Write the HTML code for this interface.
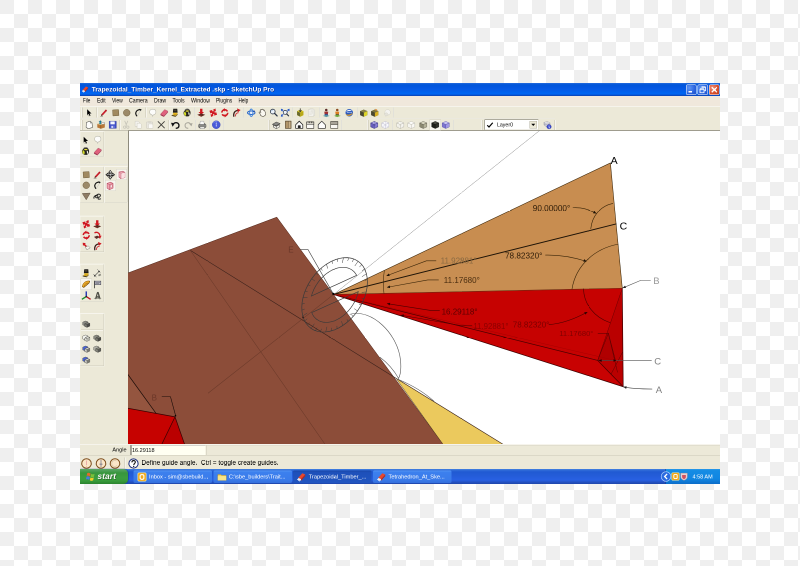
<!DOCTYPE html>
<html><head><meta charset="utf-8"><title>Trapezoidal_Timber_Kernel_Extracted .skp - SketchUp Pro</title>
<style>
html,body{margin:0;padding:0}
body{width:800px;height:566px;overflow:hidden;position:relative;background-color:#fff;
 background-image:linear-gradient(45deg,#efefef 25%,transparent 25%,transparent 75%,#efefef 75%),linear-gradient(45deg,#efefef 25%,transparent 25%,transparent 75%,#efefef 75%);
 background-size:28px 28px;background-position:14px 0,0 14px;font-family:"Liberation Sans",sans-serif}
#w{position:absolute;left:80px;top:82.75px;width:1280px;height:802px;transform:scale(.5);transform-origin:0 0;will-change:transform;background:#ece9d8;overflow:hidden;font-size:11px;color:#000}
#w *{position:absolute;box-sizing:border-box}
#tt{left:0;top:0;width:1280px;height:26px;background:linear-gradient(#2a70e0 0,#0a5ad8 2px,#0055dc 5px,#0558e4 12px,#0062ee 18px,#0066f2 22px,#0a48c0 25px,#0a40b0 26px)}
#tt .t{left:23.5px;top:5px;color:#fff;font-weight:bold;font-size:13px;letter-spacing:.04px;white-space:nowrap;text-shadow:1px 1px 0 #0a2a8a}
.cb{top:3px;width:21px;height:21px;border:1px solid #fff;border-radius:3px;background:radial-gradient(circle at 30% 30%,#5f96f5,#2a63dd 60%,#1c4fc8)}
.cb.x{background:radial-gradient(circle at 30% 30%,#f0907a,#d9512f 55%,#b8371a)}
#mn{left:0;top:26px;width:1280px;height:20px;background:#f0e8dc}
#mn span{top:2px;white-space:nowrap}
#tb{left:0;top:46px;width:1280px;height:49px;background:#ece9d8;border-top:1px solid #fff;border-bottom:1px solid #a4a192}
.ic{overflow:visible}
.vs{width:2px;border-left:1px solid #c5c2b2;border-right:1px solid #fff}
.gr{width:3px;border-left:1px solid #fff;border-right:1px solid #c4c1b0;background:#e4e1d2}
.sel{background:#f8f7f1;border:1px solid #d4d1c2}
.sel2{background:#f7f5ee;border:1px solid #d9d6c8}
.bx{border:1px solid #d0cdbd;border-top-color:#fbfaf4;border-left-color:#f4f2e8;box-shadow:0 0 0 1px rgba(255,255,255,.35)}
.hl{height:2px;border-top:1px solid #cfccbb;border-bottom:1px solid #fff}
.combo{background:#fff;border:1px solid #dedbcc;border-top-color:#6e6c62;border-left-color:#6e6c62}
.combo .chk{left:3px;top:4px}
.combo .lt{left:24px;top:3px;font-size:11px;transform:scaleX(.95);transform-origin:0 0}
.combo .dd{right:1px;top:1px;width:17px;height:17px;background:#ece9d8;border:1px solid #fff;box-shadow:0 0 0 1px #b5b2a2 inset}
.combo .dd svg{left:3px;top:5px}
#cv{left:96px;top:95px;width:1184px;height:627px;background:#fff;border-left:2px solid #8d8a7c;border-top:1px solid #9a978a}
#cv svg{left:0;top:0}
#ab{left:0;top:722px;width:1280px;height:22px;background:#ece9d8;border-top:1px solid #fff}
#ab .l{left:0;width:93px;top:4px;text-align:right}
#ab .in{left:101px;top:1px;width:150px;height:20px;background:#fffff2;border-left:2px solid #55524a;border-top:1px solid #aaa}
#ab .in span{left:1px;top:3px}
#ab .r{left:252px;top:1px;right:0;height:20px;border-left:1px solid #c9c6b6;border-top:1px solid #d6d3c3}
#sb{left:0;top:744px;width:1280px;height:28px;background:#ece9d8;border-top:1px solid #c9c6b6}
#sb .tx{left:123px;top:6px;font-size:13px;letter-spacing:-.02px;white-space:nowrap}
#tk{left:0;top:772px;width:1280px;height:30px;background:linear-gradient(#4684e0 0,#2c66d6 3px,#205ad2 6px,#245cd8 13px,#2860e2 22px,#2452c4 26px,#1e46aa 30px)}
#st{left:0;top:0;width:96px;height:30px;border-radius:0 9px 9px 0;background:linear-gradient(#5aa866 0,#4a9e54 4px,#37963c 8px,#3c9e40 18px,#379a3a 24px,#2a822e 30px);box-shadow:1px 0 2px #123a8a}
#st span{left:35px;top:5px;color:#fff;font-size:16.5px;font-style:italic;font-weight:bold;letter-spacing:.3px;text-shadow:1px 1px 1px #1a4a1a}
.tk{top:3px;width:157px;height:25px;border-radius:3px;background:linear-gradient(#5a9af5 0,#3c80ee 3px,#3a7bea 18px,#346fdc 25px);color:#fff;overflow:hidden}
.tk span{left:31px;top:6px;white-space:nowrap;font-size:11.3px}
.tk.act{background:linear-gradient(#1a47a8 0,#1e50ba 4px,#2155c0 25px)}
#ty{left:1171px;top:0;width:109px;height:30px;background:linear-gradient(#2a9ae8 0,#148ce4 3px,#1086e2 20px,#0c6cc8 30px);border-left:1px solid #0d3d9a}
#ty span{left:53px;top:9px;color:#fff;font-size:11px;white-space:nowrap}
</style></head><body>
<div id="w">
<div id="tt"><svg class="ic" style="left:3px;top:5px" width="15" height="15" viewBox="0 0 24 24"><path d="M4 14L14 3l7 3-10 11z" fill="#e8482c"/><path d="M4 14l7 3v4l-7-3z" fill="#f4f2ee"/><path d="M11 17L21 6v4L11 21z" fill="#b82818"/><path d="M2 17l6 5" stroke="#fff" stroke-width="2.200"/></svg><span class="t">Trapezoidal_Timber_Kernel_Extracted .skp - SketchUp Pro</span>
<div class="cb" style="left:1212px"><svg width="19" height="19" viewBox="0 0 19 19"><rect x="4" y="12" width="7" height="3" fill="#fff"/></svg></div>
<div class="cb" style="left:1235px"><svg width="19" height="19" viewBox="0 0 19 19"><path d="M7 4.5h8v7h-3M4 8.500h8v7h-8z" fill="none" stroke="#fff" stroke-width="1.6"/><path d="M4 8h8M7 4h8" stroke="#fff" stroke-width="2.4"/></svg></div>
<div class="cb x" style="left:1258px"><svg width="19" height="19" viewBox="0 0 19 19"><path d="M4.500 4.500l10 10M14.500 4.500l-10 10" stroke="#fff" stroke-width="2.600"/></svg></div>
</div>
<div id="mn"><span style="left:6.3px;font-size:12px;transform:scaleX(0.760);transform-origin:0 0">File</span><span style="left:34.1px;font-size:12px;transform:scaleX(0.837);transform-origin:0 0">Edit</span><span style="left:64px;font-size:12px;transform:scaleX(0.837);transform-origin:0 0">View</span><span style="left:98.2px;font-size:12px;transform:scaleX(0.872);transform-origin:0 0">Camera</span><span style="left:148px;font-size:12px;transform:scaleX(0.864);transform-origin:0 0">Draw</span><span style="left:184.8px;font-size:12px;transform:scaleX(0.864);transform-origin:0 0">Tools</span><span style="left:222px;font-size:12px;transform:scaleX(0.890);transform-origin:0 0">Window</span><span style="left:272px;font-size:12px;transform:scaleX(0.826);transform-origin:0 0">Plugins</span><span style="left:316.5px;font-size:12px;transform:scaleX(0.790);transform-origin:0 0">Help</span></div>
<div id="tb"><i style="left:0;top:23px;width:950px;height:2px;border-top:1px solid #dedbcb;border-bottom:1px solid #f8f7f0"></i></div>
<i class="gr" style="left:3px;top:49px;height:20px"></i>
<svg class="ic" style="left:7.5px;top:49.5px" width="19" height="19" viewBox="0 0 24 24"><path d="M8 3v15l3.500-3.200 2.600 5.700 2.400-1.100-2.600-5.600H19z" fill="#000"/><path d="M7 19l5 2 5-1-3-2z" fill="#8a8a80" opacity=".5"/></svg>
<i class="vs" style="left:33px;top:49px;height:20px"></i>
<svg class="ic" style="left:37.5px;top:49.5px" width="19" height="19" viewBox="0 0 24 24"><path d="M5 20l1.500-4.500L17.500 3.500l3 3L9.500 18.500z" fill="#c8202c"/><path d="M5 20l1.500-4.500 3 3z" fill="#3a2a20"/><path d="M16 5l3 3" stroke="#7a1018" stroke-width="1"/><path d="M3 21h7" stroke="#555" stroke-width="1"/></svg>
<svg class="ic" style="left:61.5px;top:49.5px" width="19" height="19" viewBox="0 0 24 24"><path d="M4 5l15-1 1 15-15 1z" fill="#a08a60" stroke="#6e5c3a" stroke-width="1.200"/></svg>
<svg class="ic" style="left:83.5px;top:49.5px" width="19" height="19" viewBox="0 0 24 24"><circle cx="12" cy="12" r="8.500" fill="#9c8a68" stroke="#6e5c3a" stroke-width="1.200"/></svg>
<svg class="ic" style="left:106.5px;top:49.5px" width="19" height="19" viewBox="0 0 24 24"><path d="M9 21C2 13 7 4 18 4" fill="none" stroke="#111" stroke-width="2.800"/><path d="M15 2l6 2-4 4z" fill="#111"/><path d="M10 20L18 6" stroke="#aaa" stroke-width=".8"/></svg>
<i class="vs" style="left:131px;top:49px;height:20px"></i>
<svg class="ic" style="left:135.5px;top:49.5px" width="19" height="19" viewBox="0 0 24 24"><path d="M12 3c5 0 8 3 8 7s-3 7-6 7l-3 4-1-4c-4-1-6-3-6-7s3-7 8-7z" fill="#fcfcfa" stroke="#b4b2a6" stroke-width="1.300"/></svg>
<svg class="ic" style="left:158.5px;top:49.5px" width="19" height="19" viewBox="0 0 24 24"><path d="M3 15L13 4l8 4-10 11z" fill="#e0607c"/><path d="M3 15l8 4v3l-8-4z" fill="#a83050"/><path d="M11 19L21 8v3L11 22z" fill="#c04464"/><path d="M13 4l8 4" stroke="#f0a0b4" stroke-width="1.200"/><path d="M3 15L13 4l8 4v3L11 22l-8-4z" fill="none" stroke="#8a2a44" stroke-width=".8"/></svg>
<svg class="ic" style="left:180.5px;top:49.5px" width="19" height="19" viewBox="0 0 24 24"><path d="M7 2h10l1 10H6z" fill="#1c1a16"/><path d="M9 4h6v4H9z" fill="#4a4234"/><path d="M7 12h10l1 3H6z" fill="#e8b820"/><path d="M3 18l6-3h9l-5 5z" fill="#caa018"/><path d="M3 18l10 2v2l-10-2z" fill="#2a2008"/><path d="M13 20l5-5v2l-5 5z" fill="#5a4410"/></svg>
<svg class="ic" style="left:204.5px;top:49.5px" width="19" height="19" viewBox="0 0 24 24"><path d="M5 7c4-5 11-5 14 0 3 5 1 12-4 14-5 1-11-1-12-6-1-3 0-6 2-8z" fill="#26241c"/><path d="M5 9c-2 4-2 9 3 11 2-4 2-9-3-11z" fill="#d4dc28"/><path d="M7 8c2-2 7-3 10 0-3 2-7 2-10 0z" fill="#e8e040"/><path d="M15 10c3 1 4 6 2 9-2-2-3-6-2-9z" fill="#f4f4ec"/><path d="M6 5c3-4 10-4 12 1" fill="none" stroke="#555" stroke-width="1.300"/></svg>
<i class="vs" style="left:228px;top:49px;height:20px"></i>
<svg class="ic" style="left:232.5px;top:49.5px" width="19" height="19" viewBox="0 0 24 24"><path d="M9 2h6v8h4l-7 7-7-7h4z" fill="#d01820"/><path d="M2 17l10-3 10 3-10 5z" fill="#5a2a20"/><path d="M2 17l10 5v-3z" fill="#8a3a30"/></svg>
<svg class="ic" style="left:256.5px;top:49.5px" width="19" height="19" viewBox="0 0 24 24"><path d="M12 0l4.500 6h-2.800v3.300H17V6.500l6 5.500-6 5.500v-2.800h-3.300V18h2.800L12 24l-4.500-6h2.800v-3.300H7v2.800L1 12l6-5.500v2.800h3.300V6H7.500z" fill="#d01820" transform="rotate(28 12 12)"/></svg>
<svg class="ic" style="left:279.5px;top:49.5px" width="19" height="19" viewBox="0 0 24 24"><circle cx="12" cy="12" r="7.500" fill="none" stroke="#d01820" stroke-width="4" stroke-dasharray="19 4.560"/><path d="M12 0l-5 4.500 5 4.500zM12 24l5-4.500-5-4.500z" fill="#d01820"/></svg>
<svg class="ic" style="left:302.5px;top:49.5px" width="19" height="19" viewBox="0 0 24 24"><path d="M6 22C4 12 9 6 18 6" fill="none" stroke="#3a1c1a" stroke-width="3.200"/><path d="M10 21c0-6 3-9 8-9" fill="none" stroke="#c82028" stroke-width="2.200"/><path d="M14 1l9 4-7 6z" fill="#d01820"/></svg>
<i class="vs" style="left:326px;top:49px;height:20px"></i>
<svg class="ic" style="left:332.5px;top:49.5px" width="19" height="19" viewBox="0 0 24 24"><ellipse cx="12" cy="12" rx="9.500" ry="4.500" fill="none" stroke="#2a66c8" stroke-width="2.600"/><ellipse cx="12" cy="12" rx="4" ry="9.500" fill="none" stroke="#3a80e0" stroke-width="2.400"/><circle cx="12" cy="12" r="3" fill="#e8f0ff"/><path d="M19 5l3 5-6-.5z" fill="#1a4aa8"/></svg>
<svg class="ic" style="left:354.5px;top:49.5px" width="19" height="19" viewBox="0 0 24 24"><path d="M6 12c-3-3-1-6 2-3l1 1V5c0-2 2.500-2 2.500 0 0-2.500 3-2.500 3 0 0-2 2.500-1.500 2.500.5V8c0-1.500 2.500-1.500 2.500.5v6c0 5-3 7-7 7-3.500 0-5-2-7-5z" fill="#faf8f0" stroke="#3a342a" stroke-width="1.300" transform="rotate(-20 12 12)"/></svg>
<svg class="ic" style="left:377.5px;top:49.5px" width="19" height="19" viewBox="0 0 24 24"><circle cx="9.500" cy="9" r="6" fill="#eef4fb" stroke="#2a3444" stroke-width="2"/><path d="M14 13.500l6.500 6.500" stroke="#2a3444" stroke-width="3.200" stroke-linecap="round"/><path d="M6.500 8a3.500 3.500 0 0 1 3-2.500" stroke="#8ab0e0" stroke-width="1.300" fill="none"/></svg>
<svg class="ic" style="left:400.5px;top:49.5px" width="19" height="19" viewBox="0 0 24 24"><circle cx="12" cy="11" r="5" fill="#eef4fb" stroke="#2a3444" stroke-width="1.800"/><path d="M15.500 15l5 5" stroke="#2a3444" stroke-width="2.800" stroke-linecap="round"/><path d="M1 2l6 1-2 2 3 3-1.500 1.500-3-3-2 2zM23 2l-6 1 2 2-3 3 1.500 1.500 3-3 2 2zM1 22l6-1-2-2 3-3-1.500-1.500-3 3-2-2z" fill="#2a5ac8"/></svg>
<i class="vs" style="left:424px;top:49px;height:20px"></i>
<svg class="ic" style="left:430.5px;top:49.5px" width="19" height="19" viewBox="0 0 24 24"><path d="M4 8l8-4 8 4v10l-8 4-8-4z" fill="#e8d820"/><path d="M4 8l8 4v10l-8-4z" fill="#6a6a30"/><path d="M12 12l8-4v10l-8 4z" fill="#b8a818"/><path d="M12 1v8m-3.500-3l3.500 3.500 3.500-3.500" stroke="#3a3a3a" stroke-width="2" fill="none"/></svg>
<svg class="ic" style="left:452.5px;top:49.5px" width="19" height="19" viewBox="0 0 24 24"><path d="M5 4h9l4 4v13H5z" fill="#f2f1ec" stroke="#c8c6bc" stroke-width="1"/><path d="M8 2h9l4 4v13h-3" fill="#e8e7e0" stroke="#cfcdc4" stroke-width="1"/><path d="M7 10h8M7 13h8M7 16h6" stroke="#d8d6cc" stroke-width="1"/></svg>
<i class="vs" style="left:478px;top:49px;height:20px"></i>
<svg class="ic" style="left:482.5px;top:49.5px" width="19" height="19" viewBox="0 0 24 24"><circle cx="12" cy="5" r="3.200" fill="#5a2a28"/><path d="M7 9h10l-1 8h-2.500l-.5 5h-2l-.5-5H8z" fill="#a03030"/><path d="M8 15h8v6H8z" fill="#3a4a8a"/><path d="M3 20l9-3 9 3-9 3z" fill="#58a0a8" opacity=".85"/></svg>
<svg class="ic" style="left:504.5px;top:49.5px" width="19" height="19" viewBox="0 0 24 24"><circle cx="12" cy="5" r="3.200" fill="#8a4a20"/><path d="M7 9h10l-1 8h-2.500l-.5 5h-2l-.5-5H8z" fill="#e08020"/><path d="M8 15h8v6H8z" fill="#6a5a30"/><path d="M3 20l9-3 9 3-9 3z" fill="#70b040" opacity=".9"/></svg>
<svg class="ic" style="left:528.5px;top:49.5px" width="19" height="19" viewBox="0 0 24 24"><circle cx="12" cy="12" r="9.500" fill="#2a5ac0"/><path d="M4 9c3-5 11-6 15-1-5-1-9 0-15 1z" fill="#f4f6fb"/><path d="M3 15c5 3 12 2 18-3-2 6-9 10-15 7z" fill="#e8a020"/><path d="M6 12c4-2 9-2 13 0" stroke="#fff" stroke-width="1.200" fill="none"/></svg>
<i class="vs" style="left:554px;top:49px;height:20px"></i>
<svg class="ic" style="left:557.5px;top:49.5px" width="19" height="19" viewBox="0 0 24 24"><path d="M3 8l9-4 9 4v10l-9 4-9-4z" fill="#3a3828"/><path d="M3 8l9 4 9-4-9-4z" fill="#8a8448"/><path d="M12 12l9-4v10l-9 4z" fill="#dcd428"/><path d="M3 8l9 4v10l-9-4z" fill="#4a4830"/></svg>
<svg class="ic" style="left:579.5px;top:49.5px" width="19" height="19" viewBox="0 0 24 24"><path d="M3 8l9-4 9 4v10l-9 4-9-4z" fill="#3a3828"/><path d="M3 8l9 4 9-4-9-4z" fill="#7a7440"/><path d="M12 12l9-4v10l-9 4z" fill="#d8b020"/><path d="M3 8l9 4v10l-9-4z" fill="#4a4830"/><path d="M14 2l5 3-6 2z" fill="#e08020"/></svg>
<svg class="ic" style="left:604.5px;top:49.5px" width="19" height="19" viewBox="0 0 24 24"><circle cx="13" cy="11" r="7" fill="#f4f3ef" stroke="#d2d0c6" stroke-width="1.200"/><path d="M4 14l7-2 4 5-7 4z" fill="#e4e2da" stroke="#cfcdc2" stroke-width="1"/></svg>
<i class="vs" style="left:626px;top:49px;height:20px"></i>
<i class="gr" style="left:3px;top:73.5px;height:20px"></i>
<svg class="ic" style="left:8.5px;top:74px" width="19" height="19" viewBox="0 0 24 24"><path d="M5 6l9-3 5 4 1 12-11 3-5-4z" fill="#fdfdfb" stroke="#4a4a44" stroke-width="1.300"/><path d="M14 3l1 5 4-1" fill="#e4e2d8" stroke="#4a4a44" stroke-width="1"/></svg>
<svg class="ic" style="left:32.5px;top:74px" width="19" height="19" viewBox="0 0 24 24"><path d="M2 10l9-3 10 3v9l-10 3-9-3z" fill="#b87838"/><path d="M2 10l9 3 10-3-10-3z" fill="#e8c890"/><path d="M11 13v9" stroke="#6a3a10" stroke-width="1"/><path d="M8 2l4 2-1 7-4-1z" fill="#1a8aa0"/><path d="M5 4l6-3 2 4z" fill="#1a6a88"/><path d="M13 6l7 0 1 4-8 1z" fill="#f6f4ee" stroke="#555" stroke-width=".8"/></svg>
<svg class="ic" style="left:55.5px;top:74px" width="19" height="19" viewBox="0 0 24 24"><path d="M3 3h16l2 2v16H3z" fill="#3c4cc4"/><path d="M6 3h11v8H6z" fill="#f4f6ff"/><path d="M7 14h10v7H7z" fill="#6a78dc"/><path d="M9 15h3v5H9z" fill="#f0f2ff"/><path d="M3 3h18v18H3z" fill="none" stroke="#2a3498" stroke-width="1"/></svg>
<i class="vs" style="left:79px;top:73.5px;height:20px"></i>
<svg class="ic" style="left:82.5px;top:74px" width="19" height="19" viewBox="0 0 24 24"><path d="M8 2l5 12M16 2l-5 12" stroke="#c6c4b8" stroke-width="2"/><circle cx="8" cy="18" r="3" fill="none" stroke="#c6c4b8" stroke-width="1.800"/><circle cx="16" cy="18" r="3" fill="none" stroke="#c6c4b8" stroke-width="1.800"/></svg>
<svg class="ic" style="left:106.5px;top:74px" width="19" height="19" viewBox="0 0 24 24"><path d="M4 3h8l3 3v10H4z" fill="#f4f3ee" stroke="#cbc9be" stroke-width="1.200"/><path d="M9 8h8l3 3v10H9z" fill="#f8f7f3" stroke="#cbc9be" stroke-width="1.200"/></svg>
<svg class="ic" style="left:129.5px;top:74px" width="19" height="19" viewBox="0 0 24 24"><path d="M4 5h15v16H4z" fill="#e9e7df" stroke="#c9c7bc" stroke-width="1.200"/><path d="M8 3h7v4H8z" fill="#d6d4ca"/><path d="M9 10h9l2 2v9H9z" fill="#fbfaf7" stroke="#cbc9be" stroke-width="1"/></svg>
<svg class="ic" style="left:152.5px;top:74px" width="19" height="19" viewBox="0 0 24 24"><path d="M4 4l16 16M20 4L4 20" stroke="#3c3a36" stroke-width="2.100" stroke-linecap="round"/></svg>
<i class="vs" style="left:177px;top:73.5px;height:20px"></i>
<svg class="ic" style="left:181.5px;top:74px" width="19" height="19" viewBox="0 0 24 24"><path d="M5 13c2-9 16-8 15 2-.5 4-4 6-8 6" fill="none" stroke="#151515" stroke-width="3.600"/><path d="M0 7l10 1-6 9z" fill="#151515"/></svg>
<svg class="ic" style="left:206.5px;top:74px" width="19" height="19" viewBox="0 0 24 24"><path d="M19 13c-2-9-16-8-15 2 .5 4 4 6 8 6" fill="none" stroke="#a9a79c" stroke-width="2.600"/><path d="M23 8l-9 1 6 7z" fill="#a9a79c"/></svg>
<i class="vs" style="left:230px;top:73.5px;height:20px"></i>
<svg class="ic" style="left:234.5px;top:74px" width="19" height="19" viewBox="0 0 24 24"><path d="M2 12l6-4h10l4 4v6l-4 3H6l-4-3z" fill="#5a5a58"/><path d="M7 3h9l1 8H6z" fill="#fafaf8" stroke="#777" stroke-width=".8"/><path d="M2 12h20v5H2z" fill="#8a8a86"/><path d="M6 17h12l-1 5H7z" fill="#e8e8e4" stroke="#666" stroke-width=".8"/></svg>
<i class="vs" style="left:258px;top:73.5px;height:20px"></i>
<svg class="ic" style="left:262.5px;top:74px" width="19" height="19" viewBox="0 0 24 24"><circle cx="12" cy="12" r="10" fill="#4a5ad8"/><circle cx="12" cy="12" r="10" fill="none" stroke="#3844b8" stroke-width="1.200"/><circle cx="12" cy="8" r="1.400" fill="#fff"/><path d="M11 11h2v5.500h-2z" fill="#dfe2ff"/><path d="M5 8a8 8 0 0 1 10-4.500" stroke="#8a98f0" stroke-width="1.600" fill="none"/></svg>
<i class="vs" style="left:286px;top:73.5px;height:20px"></i>
<i class="gr" style="left:376px;top:73.5px;height:20px"></i>
<svg class="ic" style="left:382.5px;top:74px" width="19" height="19" viewBox="0 0 24 24"><path d="M2 11l10-6 10 4-2 3v6l-9 4-7-4v-5z" fill="#6a6a66"/><path d="M2 11l10-6 10 4-10 5z" fill="#8a8a86" stroke="#33312c" stroke-width="1"/><path d="M5 13l7 3 8-4v6l-8 4-7-4z" fill="#f0efe8" stroke="#33312c" stroke-width="1"/><path d="M12 16v6" stroke="#33312c" stroke-width="1"/></svg>
<svg class="ic" style="left:406.5px;top:74px" width="19" height="19" viewBox="0 0 24 24"><path d="M5 3h14v18H5z" fill="#c8b088" stroke="#5a4a30" stroke-width="1.300"/><path d="M12 3v18" stroke="#4a3a24" stroke-width="1.600"/><path d="M5 3h7v18H5z" fill="#b09468"/><path d="M5 3h14v18H5z" fill="none" stroke="#5a4a30" stroke-width="1.300"/></svg>
<svg class="ic" style="left:428.5px;top:74px" width="19" height="19" viewBox="0 0 24 24"><path d="M3 12L12 3l9 9v9H3z" fill="#fdfdfb" stroke="#161616" stroke-width="1.800"/><path d="M9 21v-7h6v7" fill="#222" stroke="#161616" stroke-width="1"/></svg>
<svg class="ic" style="left:450.5px;top:74px" width="19" height="19" viewBox="0 0 24 24"><path d="M3 5h18v16H3z" fill="#fbfaf6" stroke="#33312c" stroke-width="1.500"/><path d="M3 5h18v6H3z" fill="#d9d6ca" stroke="#33312c" stroke-width="1.300"/><path d="M8 3h3v5H8zM14 3h3v5h-3z" fill="#5a5850"/></svg>
<svg class="ic" style="left:473.5px;top:74px" width="19" height="19" viewBox="0 0 24 24"><path d="M3 12L12 3l9 9v9H3z" fill="#fdfdfb" stroke="#222" stroke-width="1.700"/></svg>
<svg class="ic" style="left:498.5px;top:74px" width="19" height="19" viewBox="0 0 24 24"><path d="M3 4h18v17H3z" fill="#f8f7f2" stroke="#4a4840" stroke-width="1.500"/><path d="M3 4h18v8H3z" fill="#a8a498" stroke="#4a4840" stroke-width="1.200"/></svg>
<i class="vs" style="left:522px;top:73.5px;height:20px"></i>
<i class="gr" style="left:574px;top:73.5px;height:20px"></i>
<svg class="ic" style="left:578.5px;top:74px" width="19" height="19" viewBox="0 0 24 24"><path d="M3 7.500l9-4 9 4-9 4z" fill="#b0a8e8" stroke="#3a3480" stroke-width="1.1"/><path d="M3 7.500l9 4v10l-9-4z" fill="#6a60c0" stroke="#3a3480" stroke-width="1.1"/><path d="M12 11.500l9-4v10l-9 4z" fill="#8a80d8" stroke="#3a3480" stroke-width="1.1"/><path d="M3 17.500l9-4 9 4M12 3.500v10" stroke="#3a3480" stroke-width=".9" fill="none" stroke-dasharray="1.500 1"/></svg>
<svg class="ic" style="left:600.5px;top:74px" width="19" height="19" viewBox="0 0 24 24"><path d="M3 7.500l9-4 9 4-9 4z" fill="#fbfbfd" stroke="#b8b6c8" stroke-width="1"/><path d="M3 7.500l9 4v10l-9-4z" fill="#f6f6fa" stroke="#b8b6c8" stroke-width="1"/><path d="M12 11.500l9-4v10l-9 4z" fill="#f9f9fc" stroke="#b8b6c8" stroke-width="1"/><path d="M3 17.500l9-4 9 4M12 3.500v10" stroke="#c4c2d4" stroke-width=".9" fill="none"/></svg>
<i class="vs" style="left:624px;top:73.5px;height:20px"></i>
<svg class="ic" style="left:630.5px;top:74px" width="19" height="19" viewBox="0 0 24 24"><path d="M3 7.500l9-4 9 4-9 4z" fill="#fafaf6" stroke="#b0aea2" stroke-width="1"/><path d="M3 7.500l9 4v10l-9-4z" fill="#f3f2ec" stroke="#b0aea2" stroke-width="1"/><path d="M12 11.500l9-4v10l-9 4z" fill="#f6f5f0" stroke="#b0aea2" stroke-width="1"/><path d="M3 17.500l9-4 9 4M12 3.500v10" stroke="#c8c6ba" stroke-width=".8" fill="none" stroke-dasharray="1.500 1"/></svg>
<svg class="ic" style="left:652.5px;top:74px" width="19" height="19" viewBox="0 0 24 24"><path d="M3 7.500l9-4 9 4-9 4z" fill="#fcfcfa" stroke="#b8b6aa" stroke-width="1"/><path d="M3 7.500l9 4v10l-9-4z" fill="#f6f5f0" stroke="#b8b6aa" stroke-width="1"/><path d="M12 11.500l9-4v10l-9 4z" fill="#f9f8f4" stroke="#b8b6aa" stroke-width="1"/></svg>
<svg class="ic" style="left:676.5px;top:74px" width="19" height="19" viewBox="0 0 24 24"><path d="M3 7.500l9-4 9 4-9 4z" fill="#d8d6c0" stroke="#5a5848" stroke-width="1"/><path d="M3 7.500l9 4v10l-9-4z" fill="#8a8870" stroke="#5a5848" stroke-width="1"/><path d="M12 11.500l9-4v10l-9 4z" fill="#b4b298" stroke="#5a5848" stroke-width="1"/></svg>
<i class="sel" style="left:698.5px;top:72.5px;width:23px;height:22px"></i>
<svg class="ic" style="left:700.5px;top:74px" width="19" height="19" viewBox="0 0 24 24"><path d="M3 7.500l9-4 9 4-9 4z" fill="#4a4c44" stroke="#0c0c0a" stroke-width="1"/><path d="M3 7.500l9 4v10l-9-4z" fill="#1e201c" stroke="#0c0c0a" stroke-width="1"/><path d="M12 11.500l9-4v10l-9 4z" fill="#30322c" stroke="#0c0c0a" stroke-width="1"/></svg>
<svg class="ic" style="left:721.5px;top:74px" width="19" height="19" viewBox="0 0 24 24"><path d="M3 7.500l9-4 9 4-9 4z" fill="#c8c4f4" stroke="#5850a8" stroke-width="1"/><path d="M3 7.500l9 4v10l-9-4z" fill="#7c74d0" stroke="#5850a8" stroke-width="1"/><path d="M12 11.500l9-4v10l-9 4z" fill="#a098e4" stroke="#5850a8" stroke-width="1"/></svg>
<i class="vs" style="left:746px;top:73.5px;height:20px"></i>
<i class="gr" style="left:802px;top:73.5px;height:20px"></i>
<svg class="ic" style="left:924.5px;top:74px" width="19" height="19" viewBox="0 0 24 24"><path d="M3 6l10-2 7 4-10 3z" fill="#fafafa" stroke="#8a8a9a" stroke-width="1"/><path d="M3 9l10-2 7 4-10 3z" fill="#e8e8f0" stroke="#8a8a9a" stroke-width="1"/><path d="M3 12l10-2 7 4-10 3z" fill="#d0d0dc" stroke="#8a8a9a" stroke-width="1"/><circle cx="16.500" cy="17" r="5.500" fill="#3848d0" stroke="#1a2490" stroke-width="1"/><path d="M16.500 13.800v1.500m-1.200 1.500h1.600v3.400m-1.500 0h3" stroke="#fff" stroke-width="1.400" fill="none"/></svg>
<i class="vs" style="left:949px;top:73.5px;height:20px"></i>
<div class="combo" style="left:809px;top:73px;width:108px;height:21px"><svg class="chk" width="14" height="12" viewBox="0 0 14 12"><path d="M1.5 6.5 L5 10 L12.5 1.5" fill="none" stroke="#000" stroke-width="2.4"/></svg><span class="lt">Layer0</span><b class="dd"><svg width="9" height="6" viewBox="0 0 9 6"><path d="M0.5 0.5h8L4.5 5z" fill="#000"/></svg></b></div>
<i class="bx" style="left:0px;top:97px;width:47.5px;height:50px"></i>
<svg class="ic" style="left:1px;top:105px" width="19" height="19" viewBox="0 0 24 24"><path d="M8 3v15l3.500-3.200 2.600 5.700 2.400-1.100-2.600-5.600H19z" fill="#000"/><path d="M7 19l5 2 5-1-3-2z" fill="#8a8a80" opacity=".5"/></svg>
<svg class="ic" style="left:25.5px;top:104px" width="19" height="19" viewBox="0 0 24 24"><path d="M12 3c5 0 8 3 8 7s-3 7-6 7l-3 4-1-4c-4-1-6-3-6-7s3-7 8-7z" fill="#fcfcfa" stroke="#b4b2a6" stroke-width="1.300"/></svg>
<svg class="ic" style="left:1.5px;top:126.5px" width="19" height="19" viewBox="0 0 24 24"><path d="M5 7c4-5 11-5 14 0 3 5 1 12-4 14-5 1-11-1-12-6-1-3 0-6 2-8z" fill="#26241c"/><path d="M5 9c-2 4-2 9 3 11 2-4 2-9-3-11z" fill="#d4dc28"/><path d="M7 8c2-2 7-3 10 0-3 2-7 2-10 0z" fill="#e8e040"/><path d="M15 10c3 1 4 6 2 9-2-2-3-6-2-9z" fill="#f4f4ec"/><path d="M6 5c3-4 10-4 12 1" fill="none" stroke="#555" stroke-width="1.300"/></svg>
<svg class="ic" style="left:25.5px;top:126.5px" width="19" height="19" viewBox="0 0 24 24"><path d="M3 15L13 4l8 4-10 11z" fill="#e0607c"/><path d="M3 15l8 4v3l-8-4z" fill="#a83050"/><path d="M11 19L21 8v3L11 22z" fill="#c04464"/><path d="M13 4l8 4" stroke="#f0a0b4" stroke-width="1.200"/><path d="M3 15L13 4l8 4v3L11 22l-8-4z" fill="none" stroke="#8a2a44" stroke-width=".8"/></svg>
<i class="hl" style="left:0;top:162px;width:96px"></i>
<i class="bx" style="left:0px;top:167px;width:47.5px;height:72px"></i>
<svg class="ic" style="left:2.5px;top:173.5px" width="19" height="19" viewBox="0 0 24 24"><path d="M4 5l15-1 1 15-15 1z" fill="#a08a60" stroke="#6e5c3a" stroke-width="1.200"/></svg>
<svg class="ic" style="left:25px;top:173.5px" width="19" height="19" viewBox="0 0 24 24"><path d="M5 20l1.500-4.500L17.500 3.500l3 3L9.500 18.500z" fill="#c8202c"/><path d="M5 20l1.500-4.500 3 3z" fill="#3a2a20"/><path d="M16 5l3 3" stroke="#7a1018" stroke-width="1"/><path d="M3 21h7" stroke="#555" stroke-width="1"/></svg>
<svg class="ic" style="left:2.5px;top:195px" width="19" height="19" viewBox="0 0 24 24"><circle cx="12" cy="12" r="8.500" fill="#9c8a68" stroke="#6e5c3a" stroke-width="1.200"/></svg>
<svg class="ic" style="left:25px;top:195px" width="19" height="19" viewBox="0 0 24 24"><path d="M9 21C2 13 7 4 18 4" fill="none" stroke="#111" stroke-width="2.800"/><path d="M15 2l6 2-4 4z" fill="#111"/><path d="M10 20L18 6" stroke="#aaa" stroke-width=".8"/></svg>
<svg class="ic" style="left:2.5px;top:217px" width="19" height="19" viewBox="0 0 24 24"><path d="M2 5l20-1-10 17z" fill="#8e7c64" stroke="#5e5040" stroke-width="1.200"/></svg>
<svg class="ic" style="left:25px;top:217px" width="19" height="19" viewBox="0 0 24 24"><path d="M4 18c-2-5 3-9 7-8 4 1 3 6-1 6-3 0-3-5 2-8 3-2 8-2 8 2 0 5-6 4-6 8 0 2 5 2 7 0" fill="none" stroke="#1c1c1c" stroke-width="2.300"/></svg>
<i class="bx" style="left:48.5px;top:167px;width:46.5px;height:72px"></i>
<svg class="ic" style="left:50.5px;top:173.5px" width="19" height="19" viewBox="0 0 24 24"><path d="M12 1l4 5h-2.500v4.500H18V8l5 4-5 4v-2.500h-4.500V18H16l-4 5-4-5h2.500v-4.500H6V16l-5-4 5-4v2.500h4.500V6H8z" fill="#fdfdfa" stroke="#111" stroke-width="1.500"/><ellipse cx="12" cy="12" rx="8.500" ry="3.500" fill="none" stroke="#111" stroke-width="1.100"/></svg>
<i class="sel2" style="left:72px;top:172px;width:22px;height:22px"></i>
<svg class="ic" style="left:73.5px;top:173.5px" width="19" height="19" viewBox="0 0 24 24"><path d="M5 5l10-2 5 3v13l-10 3-5-4z" fill="#f4b8c0" stroke="#b85068" stroke-width="1.400"/><path d="M10 8l10-2v13l-10 3z" fill="#fbe0e3"/><path d="M5 5l5 3 10-2M10 8v14" stroke="#b85068" stroke-width="1.200" fill="none"/></svg>
<i class="sel2" style="left:49.5px;top:194px;width:22px;height:22px"></i>
<svg class="ic" style="left:51px;top:195.5px" width="19" height="19" viewBox="0 0 24 24"><path d="M4 6l9-3 6 3v12l-9 4-6-4z" fill="#f0a8b4" stroke="#b84c60" stroke-width="1.400"/><path d="M4 6l6 3 9-3M10 9v13" stroke="#b84c60" stroke-width="1.200" fill="none"/><path d="M12 11l5-2v7l-5 2z" fill="#fbe4e6" stroke="#b84c60" stroke-width=".8"/></svg>
<i class="bx" style="left:0px;top:266px;width:47.5px;height:72px"></i>
<svg class="ic" style="left:2.5px;top:272.5px" width="19" height="19" viewBox="0 0 24 24"><path d="M12 0l4.500 6h-2.800v3.300H17V6.500l6 5.500-6 5.500v-2.800h-3.300V18h2.800L12 24l-4.500-6h2.800v-3.300H7v2.800L1 12l6-5.500v2.800h3.300V6H7.500z" fill="#d01820" transform="rotate(28 12 12)"/></svg>
<svg class="ic" style="left:24.5px;top:272.5px" width="19" height="19" viewBox="0 0 24 24"><path d="M9 2h6v8h4l-7 7-7-7h4z" fill="#d01820"/><path d="M2 17l10-3 10 3-10 5z" fill="#5a2a20"/><path d="M2 17l10 5v-3z" fill="#8a3a30"/></svg>
<svg class="ic" style="left:2.5px;top:294.5px" width="19" height="19" viewBox="0 0 24 24"><circle cx="12" cy="12" r="7.500" fill="none" stroke="#d01820" stroke-width="4" stroke-dasharray="19 4.560"/><path d="M12 0l-5 4.500 5 4.500zM12 24l5-4.500-5-4.500z" fill="#d01820"/></svg>
<svg class="ic" style="left:24.5px;top:294.5px" width="19" height="19" viewBox="0 0 24 24"><path d="M5 6c8-4 15 2 13 10" fill="none" stroke="#d01820" stroke-width="3.300"/><path d="M13 15l6 6 4-8z" fill="#d01820"/><path d="M4 16l8-3 6 4-8 4z" fill="#5a3028"/><path d="M4 16l6 5" stroke="#8a4a40" stroke-width="1"/></svg>
<svg class="ic" style="left:2.5px;top:316.5px" width="19" height="19" viewBox="0 0 24 24"><path d="M3 3l8 1-2.300 2.300 6 6L12 15 6 9 3.800 11.200z" fill="#d01820"/><path d="M9 14l8-3 5 5-8 5z" fill="#f4f2ea" stroke="#6a6a60" stroke-width="1"/><path d="M9 14l5 7" stroke="#8a8a80" stroke-width=".8"/></svg>
<svg class="ic" style="left:24.5px;top:316.5px" width="19" height="19" viewBox="0 0 24 24"><path d="M6 22C4 12 9 6 18 6" fill="none" stroke="#3a1c1a" stroke-width="3.200"/><path d="M10 21c0-6 3-9 8-9" fill="none" stroke="#c82028" stroke-width="2.200"/><path d="M14 1l9 4-7 6z" fill="#d01820"/></svg>
<i class="bx" style="left:0px;top:362px;width:47.5px;height:75px"></i>
<i class="sel2" style="left:1px;top:391px;width:23px;height:23px"></i>
<svg class="ic" style="left:2.5px;top:370.5px" width="19" height="19" viewBox="0 0 24 24"><path d="M7 2h10l1 10H6z" fill="#1c1a16"/><path d="M9 4h6v4H9z" fill="#4a4234"/><path d="M7 12h10l1 3H6z" fill="#e8b820"/><path d="M3 18l6-3h9l-5 5z" fill="#caa018"/><path d="M3 18l10 2v2l-10-2z" fill="#2a2008"/><path d="M13 20l5-5v2l-5 5z" fill="#5a4410"/></svg>
<svg class="ic" style="left:24.5px;top:370.5px" width="19" height="19" viewBox="0 0 24 24"><path d="M4 20L18 6" stroke="#222" stroke-width="1.300"/><path d="M2 14l8 8M12 2l8 8" stroke="#444" stroke-width="1.200"/><path d="M4 20l1-4 3 3zM18 6l-1 4-3-3z" fill="#111"/><path d="M14 16l6-3 2 4-6 3z" fill="#8a8a80"/></svg>
<svg class="ic" style="left:2.5px;top:392.5px" width="19" height="19" viewBox="0 0 24 24"><path d="M2 18C3 8 12 2 21 4l-2 5-13 11z" fill="#e8a828" stroke="#8a5a08" stroke-width="1.200"/><path d="M7 17c1-5 5-8 10-8" fill="none" stroke="#8a5a08" stroke-width="1.100"/><path d="M2 18l4 2L19 9l2-5" fill="none" stroke="#6a4406" stroke-width="1.300"/></svg>
<svg class="ic" style="left:24.5px;top:392.5px" width="19" height="19" viewBox="0 0 24 24"><path d="M5 3v19" stroke="#222" stroke-width="1.800"/><path d="M6 4h15v9H6z" fill="#c8c8d4" stroke="#33333f" stroke-width="1.300"/><path d="M8 7h11M8 10h9" stroke="#50505c" stroke-width="1.300"/></svg>
<svg class="ic" style="left:2.5px;top:416px" width="19" height="19" viewBox="0 0 24 24"><path d="M12 14V1" stroke="#1a2cb0" stroke-width="3.400"/><path d="M12 14L1 21" stroke="#188a28" stroke-width="3.400"/><path d="M12 14l11 7" stroke="#b81820" stroke-width="3.400"/><circle cx="12" cy="14" r="2" fill="#222"/></svg>
<svg class="ic" style="left:24.5px;top:416px" width="19" height="19" viewBox="0 0 24 24"><path d="M7 20L12 3h3l5 17h-3.500l-1-4h-5l-1 4z" fill="#5a5a50" stroke="#22221c" stroke-width="1"/><path d="M3 19l4 1 1.300-4zM7 20h13l3-2H10z" fill="#8a8a7c"/><path d="M11.300 13h3.500L13 7z" fill="#d8d6c8"/></svg>
<i class="bx" style="left:0px;top:461px;width:47.5px;height:105px"></i>
<i class="hl" style="left:2px;top:493px;width:44px"></i>
<svg class="ic" style="left:2.5px;top:471.5px" width="19" height="19" viewBox="0 0 24 24"><path d="M3 8l7-3 6 2v7l-7 3-6-2z" fill="#8a8a82" stroke="#4a4a44" stroke-width="1"/><path d="M8 12l7-3 6 2v7l-7 3-6-2z" fill="#787870" stroke="#3a3a36" stroke-width="1"/><path d="M8 12l6 2 7-3M14 14v7" fill="none" stroke="#3a3a36" stroke-width="1"/><path d="M14 14l7-3v7l-7 3z" fill="#4a4a46"/></svg>
<svg class="ic" style="left:2.5px;top:499.5px" width="19" height="19" viewBox="0 0 24 24"><path d="M3 8l7-3 6 2v7l-7 3-6-2z" fill="#f4f4ee" stroke="#4a4a44" stroke-width="1"/><path d="M8 12l7-3 6 2v7l-7 3-6-2z" fill="#deded6" stroke="#3a3a36" stroke-width="1"/><path d="M8 12l6 2 7-3M14 14v7" fill="none" stroke="#3a3a36" stroke-width="1"/><path d="M14 14l7-3v7l-7 3z" fill="#b4b4aa"/></svg>
<svg class="ic" style="left:24.5px;top:499.5px" width="19" height="19" viewBox="0 0 24 24"><path d="M3 8l7-3 6 2v7l-7 3-6-2z" fill="#8a8a82" stroke="#4a4a44" stroke-width="1"/><path d="M8 12l7-3 6 2v7l-7 3-6-2z" fill="#787870" stroke="#3a3a36" stroke-width="1"/><path d="M8 12l6 2 7-3M14 14v7" fill="none" stroke="#3a3a36" stroke-width="1"/><path d="M14 14l7-3v7l-7 3z" fill="#4a4a46"/></svg>
<svg class="ic" style="left:2.5px;top:521.5px" width="19" height="19" viewBox="0 0 24 24"><path d="M3 8l7-3 6 2v7l-7 3-6-2z" fill="#4a64d4" stroke="#4a4a44" stroke-width="1"/><path d="M8 12l7-3 6 2v7l-7 3-6-2z" fill="#d0d0ca" stroke="#3a3a36" stroke-width="1"/><path d="M8 12l6 2 7-3M14 14v7" fill="none" stroke="#3a3a36" stroke-width="1"/><path d="M14 14l7-3v7l-7 3z" fill="#7a7a72"/></svg>
<svg class="ic" style="left:24.5px;top:521.5px" width="19" height="19" viewBox="0 0 24 24"><path d="M3 8l7-3 6 2v7l-7 3-6-2z" fill="#b0b0a8" stroke="#4a4a44" stroke-width="1"/><path d="M8 12l7-3 6 2v7l-7 3-6-2z" fill="#8a8a80" stroke="#3a3a36" stroke-width="1"/><path d="M8 12l6 2 7-3M14 14v7" fill="none" stroke="#3a3a36" stroke-width="1"/><path d="M14 14l7-3v7l-7 3z" fill="#5a5a54"/></svg>
<svg class="ic" style="left:2.5px;top:543.5px" width="19" height="19" viewBox="0 0 24 24"><path d="M3 8l7-3 6 2v7l-7 3-6-2z" fill="#4a64d4" stroke="#4a4a44" stroke-width="1"/><path d="M8 12l7-3 6 2v7l-7 3-6-2z" fill="#d0d0ca" stroke="#3a3a36" stroke-width="1"/><path d="M8 12l6 2 7-3M14 14v7" fill="none" stroke="#3a3a36" stroke-width="1"/><path d="M14 14l7-3v7l-7 3z" fill="#7a7a72"/></svg>
<div id="cv"><svg style="left:-2px;top:-1px" width="1184" height="627" viewBox="128 130.25 592 313.5" font-family="Liberation Sans, sans-serif"><polygon points="127,273.1 276.8,216.9 443,444 127,444" fill="#8c4d39"/><polygon points="127,373 156,413.1 127,408" fill="#94553f"/><polygon points="396,378 503,444 443,444" fill="#ebc95d"/><polygon points="127,407.8 175,416.6 184.6,444 127,444" fill="#c60200"/><polygon points="175,416.6 184.6,444 161.8,444" fill="#ba0000"/><polygon points="333.6,294.2 610.4,162.7 616.1,223.7 622.3,288" fill="#c88d50"/><polygon points="333.6,294.2 616.1,223.7 622.3,288" fill="#c88e52"/><polygon points="333.6,294.2 622.3,288 623.2,386.5" fill="#c60201"/><polygon points="333.6,294.2 597.7,360.2 623.2,386.5" fill="#c80202"/><polygon points="622.3,288 597.7,360.2 623.2,386.5" fill="#ba0000"/><polygon points="608.3,333 597.7,360.2 615.3,360.2" fill="#b00000"/><g fill="none" stroke-linecap="round"><path d="M127 273.100L276.800 216.900L443 444" stroke="#4e2418" stroke-width=".5"/><path d="M190.200 250L396 378L503 444" stroke="#38201a" stroke-width=".6"/><path d="M190.200 250L325 444" stroke="#6c3a2a" stroke-width=".55"/><path d="M208 393L333.600 294.200" stroke="#6c3a2a" stroke-width=".55"/><path d="M127 373L156 413.100" stroke="#1a0c08" stroke-width=".7"/><path d="M127 407.800L175 416.600L184.600 444M175 416.600L161.800 444" stroke="#3a0000" stroke-width=".7"/><path d="M396 378L443 444" stroke="#5a4520" stroke-width=".5"/><path d="M333.600 294.200L540 130" stroke="#777" stroke-width=".5" stroke-dasharray=".9 .6"/><path d="M333.6 294.2L610.4 162.7L616.1 223.7L622.3 288" stroke="#3a2508" stroke-width=".55"/><path d="M333.6 294.2L616.1 223.7" stroke="#1c1206" stroke-width=".95"/><path d="M333.6 294.2L622.3 288" stroke="#6a2a10" stroke-width=".6"/><path d="M622.3 288L623.2 386.5L333.6 294.2" stroke="#3a0000" stroke-width=".7"/><path d="M333.6 294.2L597.7 360.2L623.2 386.5" stroke="#4a0000" stroke-width=".7"/><path d="M333.6 294.2L615.3 360.2" stroke="#a00000" stroke-width=".4"/><path d="M622.3 288L597.7 360.2" stroke="#6a0000" stroke-width=".5"/><path d="M608.300 333L597.700 360.200L615.300 360.200Z M608.300 333L617.500 372 M622.500 352L611 374" stroke="#5a0000" stroke-width=".5"/><path d="M358.1 261.0 L360.9 263.4 L363.3 266.3 L365.1 269.7 L366.4 273.5 L367.2 277.7 L367.4 282.2 L367.1 286.9 L366.2 291.7 L364.8 296.6 L362.8 301.4 L360.4 306.1 L357.5 310.7 L354.3 314.9 L350.7 318.8 L346.8 322.3 L342.7 325.3 L338.5 327.8 L334.2 329.7 L329.9 331.0 L325.7 331.7 L321.7 331.8 L317.8 331.2 L314.3 330.0 L311.1 328.2 L308.3 325.8 L305.9 322.9 L304.1 319.5 L302.8 315.7 L302.0 311.5 L301.8 307.0 L302.1 302.3 L303.0 297.5 L304.4 292.6 L306.4 287.8 L308.8 283.1 L311.7 278.5 L314.9 274.3 L318.5 270.4 L322.4 266.9 L326.5 263.9 L330.7 261.4 L335.0 259.5 L339.3 258.2 L343.5 257.5 L347.5 257.4 L351.4 258.0 L354.9 259.2 L358.1 261.0" stroke="#3a3a3a" stroke-width=".7"/><path d="M358.1 261.0 L354.9 265.6 M361.7 264.3 L359.6 266.7 M364.5 268.5 L362.1 270.6 M366.4 273.5 L362.1 276.4 M367.4 279.2 L364.7 280.4 M367.3 285.3 L364.7 286.1 M366.2 291.7 L361.9 292.1 M364.2 298.2 L361.8 297.9 M361.3 304.6 L359.1 303.8 M357.5 310.7 L354.4 308.5 M353.1 316.2 L351.6 314.5 M348.1 321.2 L347.0 319.1 M342.7 325.3 L341.6 321.1 M337.1 328.5 L336.9 325.8 M331.3 330.7 L331.6 327.8 M325.7 331.7 L326.9 326.7 M320.3 331.7 L321.5 328.7 M315.4 330.5 L317.0 327.6 M311.1 328.2 L314.3 323.6 M307.5 324.9 L309.6 322.5 M304.7 320.7 L307.1 318.6 M302.8 315.7 L307.1 312.8 M301.8 310.0 L304.5 308.8 M301.9 303.9 L304.5 303.1 M303.0 297.5 L307.3 297.1 M305.0 291.0 L307.4 291.3 M307.9 284.6 L310.1 285.4 M311.7 278.5 L314.8 280.7 M316.1 273.0 L317.6 274.7 M321.1 268.0 L322.2 270.1 M326.5 263.9 L327.6 268.1 M332.1 260.7 L332.3 263.4 M337.9 258.5 L337.6 261.4 M343.5 257.5 L342.3 262.5 M348.9 257.5 L347.7 260.5 M353.8 258.7 L352.2 261.6" stroke="#3a3a3a" stroke-width=".5"/><path d="M311.4 295.8 L311.9 294.3 L312.3 292.9 L312.9 291.5 L313.5 290.0 L314.1 288.6 L314.9 287.2 L315.6 285.8 L316.5 284.5 L317.3 283.2 L318.2 281.9 L319.2 280.6 L320.2 279.4 L321.3 278.2 L322.3 277.1 L323.5 276.0 L324.6 274.9 L325.8 273.9 L327.0 273.0 L328.2 272.2 L329.4 271.4 L330.7 270.6 L331.9 269.9 L333.2 269.3 L334.5 268.8 L335.8 268.3 L337.0 267.9 L338.3 267.6 L339.5 267.4 L340.8 267.2 L342.0 267.1 L343.2 267.1 L344.4 267.1 L345.5 267.2 L346.6 267.4 L347.7 267.7 L348.8 268.1 L349.8 268.5 L350.8 269.0 L351.7 269.5 L352.6 270.2 L353.4 270.9 L354.2 271.6 L354.9 272.5 L355.6 273.4 L356.2 274.3 L356.7 275.1Z" stroke="#3a3a3a" stroke-width=".65"/><path d="M358.3 291.3 L357.9 292.7 L357.6 294.1 L357.1 295.6 L356.6 297.0 L356.0 298.5 L355.4 299.9 L354.7 301.3 L354.0 302.7 L353.2 304.0 L352.3 305.4 L351.4 306.7 L350.5 308.0 L349.5 309.2 L348.5 310.4 L347.4 311.6 L346.3 312.7 L345.2 313.8 L344.0 314.8 L342.8 315.7 L341.6 316.6 L340.4 317.5 L339.1 318.2 L337.9 318.9 L336.6 319.6 L335.4 320.2 L334.1 320.7 L332.8 321.1 L331.5 321.4 L330.3 321.7 L329.0 321.9 L327.8 322.1 L326.6 322.1 L325.4 322.1 L324.2 322.0 L323.1 321.9 L322.0 321.6 L320.9 321.3 L319.9 320.9 L318.9 320.5 L318.0 319.9 L317.1 319.3 L316.2 318.7 L315.4 317.9 L314.6 317.2 L313.9 316.3 L313.3 315.4 L312.7 314.4 L312.2 313.4 L311.7 312.3 L311.7 312.3Z" stroke="#3a3a3a" stroke-width=".65"/><path d="M350 314C372 308 398 334 400.500 360C401.500 370 400 376 398 379" stroke="#555" stroke-width=".6"/><path d="M380 357C388 363 394 370 398.500 378 M398 379C410 384 424 392 434 401" stroke="#555" stroke-width=".55"/><path d="M300.500 249.300H308L333.600 294.200" stroke="#444" stroke-width=".6"/><path d="M162 396.500H170.500L175.500 415" stroke="#1a0c08" stroke-width=".6"/><path d="M384.300 270.500Q382.600 282 384 293.400" stroke="#3a2508" stroke-width=".55"/><path d="M387 275.400L426.400 260.600H436" stroke="#3a2508" stroke-width=".6"/><path d="M387.500 287L427.800 279.700H438.500" stroke="#3a2508" stroke-width=".6"/><path d="M612.800 203.200C600 206 592 216 590.800 228.500" stroke="#3a2508" stroke-width=".6"/><path d="M573 207.500C582 207 588 209 596 213" stroke="#3a2508" stroke-width=".6"/><path d="M618 244C596 248 576 264 572 288.800" stroke="#3a2508" stroke-width=".6"/><path d="M545.500 254.800C560 254.500 572 256.500 586 261" stroke="#3a2508" stroke-width=".6"/><path d="M387.500 303.400L430.600 310.200H439.500" stroke="#4a0000" stroke-width=".6"/><path d="M401.200 315L462 325.500H472" stroke="#4a0000" stroke-width=".55"/><path d="M583.500 288.500C584 304 594 317 610 322.400" stroke="#4a0000" stroke-width=".6"/><path d="M549 324.300C562 323.500 574 319 587 312" stroke="#4a0000" stroke-width=".6"/><path d="M598 333H608" stroke="#4a0000" stroke-width=".6"/><path d="M622.800 287.700L641 280H650.500" stroke="#555" stroke-width=".6"/><path d="M599 360.300H651.500" stroke="#555" stroke-width=".55"/><path d="M623.400 386.600C632 388.500 640 388.800 652 388.800" stroke="#444" stroke-width=".6"/></g><polygon points="386.3,275.6 388.847,273.243 389.767,275.768" fill="#1a1006"/><polygon points="386.8,287.1 389.718,285.221 390.185,287.868" fill="#1a1006"/><polygon points="596.5,213.2 593.039,212.945 594.259,210.55" fill="#1a1006"/><polygon points="586.8,261.2 583.341,261.489 584.172,258.933" fill="#1a1006"/><polygon points="386.8,303.3 390.171,302.473 389.75,305.128" fill="#300000"/><polygon points="400.5,314.9 403.885,314.132 403.418,316.779" fill="#300000"/><polygon points="587.6,311.7 585.406,314.389 584.144,312.016" fill="#300000"/><polygon points="622.6,287.8 625.02,285.313 626.071,287.787" fill="#222"/><polygon points="598.5,360.3 601.7,358.956 601.7,361.644" fill="#200"/><polygon points="616.5,360.3 613.5,361.56 613.5,359.04" fill="#200"/><polygon points="623.3,386.6 626.71,385.951 626.151,388.58" fill="#222"/><circle cx="333.300" cy="293.600" r="1.100" fill="#000"/><circle cx="175.500" cy="415.500" r=".8" fill="#000"/><circle cx="303" cy="317" r=".7" fill="#111"/><text x="610.6" y="163.8" font-size="10.5" fill="#000" text-anchor="start" >A</text><text x="619.6" y="229.2" font-size="10.5" fill="#000" text-anchor="start" >C</text><text x="653.3" y="283.6" font-size="9.5" fill="#9a9a9a" text-anchor="start" >B</text><text x="654.3" y="364" font-size="9.5" fill="#808080" text-anchor="start" >C</text><text x="655.8" y="392.5" font-size="9.5" fill="#808080" text-anchor="start" >A</text><text x="288.2" y="252.2" font-size="8" fill="#6a3628" text-anchor="start" >E</text><text x="151.6" y="400" font-size="8" fill="#6a3628" text-anchor="start" >B</text><text x="532.8" y="210.8" font-size="8.2" fill="#2e1c08" text-anchor="start" >90.00000°</text><text x="505" y="258.1" font-size="8.2" fill="#2e1c08" text-anchor="start" >78.82320°</text><text x="440.6" y="263.2" font-size="8" fill="#8a6a42" text-anchor="start" >11.92881°</text><text x="443.8" y="282.5" font-size="8" fill="#4a2e10" text-anchor="start" >11.17680°</text><text x="441.6" y="314.3" font-size="8" fill="#5a0000" text-anchor="start" >16.29118°</text><text x="473.4" y="328.6" font-size="7.8" fill="#8a0000" text-anchor="start" >11.92881°</text><text x="512.8" y="327.3" font-size="8" fill="#7a0000" text-anchor="start" >78.82320°</text><text x="559.2" y="335.8" font-size="7.6" fill="#800000" text-anchor="start" >11.17680°</text></svg></div>
<div id="ab"><span class="l">Angle</span><div class="in"><span>16.29118</span></div><div class="r"></div></div>
<div id="sb"><svg class="ic" style="left:0.6px;top:4px" width="24" height="24" viewBox="0 0 24 24"><circle cx="12" cy="12" r="9.500" fill="#fbe6c8" stroke="#7a4a18" stroke-width="2"/><path d="M12 6v9" stroke="#e8a0a0" stroke-width="1.600"/><circle cx="12" cy="17.500" r="1" fill="#e8a0a0"/></svg><svg class="ic" style="left:29.5px;top:4px" width="24" height="24" viewBox="0 0 24 24"><circle cx="12" cy="12" r="9.500" fill="#fbe6c8" stroke="#7a4a18" stroke-width="2"/><path d="M12 5v14" stroke="#7a7a8a" stroke-width="1.600"/><path d="M9 13h6" stroke="#7a7a8a" stroke-width="1.300"/></svg><svg class="ic" style="left:58px;top:4px" width="24" height="24" viewBox="0 0 24 24"><circle cx="12" cy="12" r="9.500" fill="#fbe6c8" stroke="#7a4a18" stroke-width="2"/><path d="M15 7a6 6 0 1 0 1 9" stroke="#d8c8a8" stroke-width="1.600" fill="none"/></svg><i class="vs" style="left:89px;top:4px;height:22px"></i><svg class="ic" style="left:95.5px;top:5px" width="22" height="22" viewBox="0 0 24 24"><circle cx="12" cy="12" r="10" fill="#fff" stroke="#1a2a78" stroke-width="2.200"/><path d="M8.500 9.500c0-5 7.500-5 7.500-.5 0 3-3.500 3-3.500 6" fill="none" stroke="#111" stroke-width="2.400"/><circle cx="12.400" cy="18.300" r="1.500" fill="#111"/></svg><span class="tx">Define guide angle.&nbsp; Ctrl = toggle create guides.</span></div>
<div id="tk"><div id="st"><svg class="ic" style="left:12px;top:5px" width="20" height="20" viewBox="0 0 24 24"><path d="M3 4c3-2 5-1 8 1l-1.500 7c-3-2-5-3-8-1z" fill="#e8682a"/><path d="M12.500 5.500c3 2 5 2 8 0L19 12.500c-3 2-5 2-8 0z" fill="#7ac03a"/><path d="M1.200 12.500c3-2 5-1 8 1L7.700 20.500c-3-2-5-3-8-1z" fill="#4a7ae0"/><path d="M10.700 14c3 2 5 2 8 0l-1.500 7c-3 2-5 2-8 0z" fill="#f4cc28"/></svg><span>start</span></div><div class="tk" style="left:107px"><svg class="ic" style="left:7px;top:3px" width="20" height="20" viewBox="0 0 24 24"><rect x="2" y="2" width="20" height="20" rx="3" fill="#f0a818" stroke="#f8e8a0" stroke-width="1.500"/><rect x="7.500" y="6.500" width="9" height="11" rx="3" fill="none" stroke="#fff" stroke-width="2.600"/></svg><span>Inbox - sim@sbebuild...</span></div><div class="tk" style="left:266.7px"><svg class="ic" style="left:7px;top:3px" width="20" height="20" viewBox="0 0 24 24"><path d="M2 6h7l2 2h11v12H2z" fill="#f0d060" stroke="#b89020" stroke-width="1"/><path d="M2 10h20v10H2z" fill="#f8e488"/></svg><span>C:\sbe_builders\Trait...</span></div><div class="tk act" style="left:426.4px"><svg class="ic" style="left:7px;top:3px" width="20" height="20" viewBox="0 0 24 24"><path d="M4 14L14 3l7 3-10 11z" fill="#e8482c"/><path d="M4 14l7 3v4l-7-3z" fill="#f4f2ee"/><path d="M11 17L21 6v4L11 21z" fill="#b82818"/><path d="M2 17l6 5" stroke="#fff" stroke-width="2.200"/></svg><span>Trapezoidal_Timber_...</span></div><div class="tk" style="left:586.1px"><svg class="ic" style="left:7px;top:3px" width="20" height="20" viewBox="0 0 24 24"><path d="M4 14L14 3l7 3-10 11z" fill="#e8482c"/><path d="M4 14l7 3v4l-7-3z" fill="#f4f2ee"/><path d="M11 17L21 6v4L11 21z" fill="#b82818"/><path d="M2 17l6 5" stroke="#fff" stroke-width="2.200"/></svg><span>Tetrahedron_At_Ske...</span></div>
<div id="ty"><svg class="ic" style="left:-11px;top:4px" width="22" height="22" viewBox="0 0 24 24"><circle cx="12" cy="12" r="10.500" fill="#2a6ae0" stroke="#b8d4fa" stroke-width="1.500"/><path d="M14.500 6.500L9 12l5.500 5.500" fill="none" stroke="#fff" stroke-width="2.800"/></svg><svg class="ic" style="left:10px;top:6px" width="18" height="18" viewBox="0 0 24 24"><rect x="2" y="2" width="20" height="20" rx="3" fill="#f0a818" stroke="#f8e8a0" stroke-width="1.500"/><rect x="7.500" y="6.500" width="9" height="11" rx="3" fill="none" stroke="#fff" stroke-width="2.600"/></svg><svg class="ic" style="left:27px;top:6px" width="18" height="18" viewBox="0 0 24 24"><path d="M3 3h18v9c0 6-5 9-9 10-4-1-9-4-9-10z" fill="#e8d0d0" stroke="#a88" stroke-width="1"/><path d="M7 8h10v5c0 3-2 5-5 6-3-1-5-3-5-6z" fill="#d05060"/></svg><span>4:58 AM</span></div></div>
</div>
</body></html>
